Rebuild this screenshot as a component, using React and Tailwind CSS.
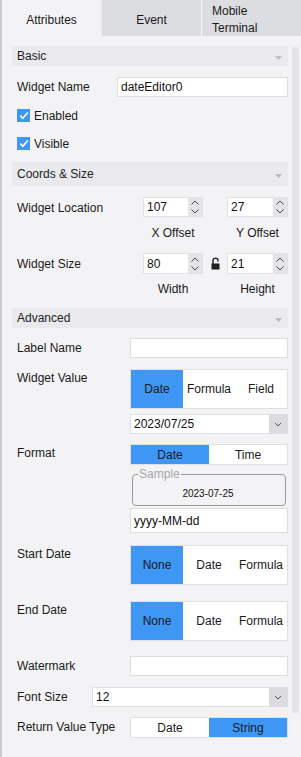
import React from 'react';

const ChevronUp = () => (
  <svg width="8" height="5" viewBox="0 0 8 5" fill="none">
    <path d="M0.5 4.5 L4 1 L7.5 4.5" stroke="#4a4a4a" strokeWidth="1" />
  </svg>
);

const ChevronDown = () => (
  <svg width="8" height="5" viewBox="0 0 8 5" fill="none">
    <path d="M0.5 0.5 L4 4 L7.5 0.5" stroke="#4a4a4a" strokeWidth="1" />
  </svg>
);

const Caret = () => (
  <svg width="7" height="4" viewBox="0 0 7 4">
    <path d="M0 0 H7 L3.5 4 Z" fill="#bdbdbd" />
  </svg>
);

const Section = ({ title, className = '' }) => (
  <div className={`flex items-center justify-between bg-[#eaeaec] pl-[5px] pr-[6px] text-[#222] ${className}`}>
    <span>{title}</span>
    <span className="pt-[3px]">
      <Caret />
    </span>
  </div>
);

const Check = ({ label, className = '' }) => (
  <div className={`flex items-center gap-[4px] pl-[5px] h-[13px] ${className}`}>
    <div className="w-[13px] h-[13px] bg-[#3e97f5] flex items-center justify-center">
      <svg width="10" height="9" viewBox="0 0 10 9" fill="none">
        <path d="M1.3 4.6 L3.8 7.2 L8.8 1.5" stroke="#fff" strokeWidth="1.6" />
      </svg>
    </div>
    <span>{label}</span>
  </div>
);

const TextInput = ({ value = '', className = '' }) => (
  <input
    readOnly
    value={value}
    className={`bg-white border border-[#dedede] px-[3px] text-[#111] outline-none min-w-0 ${className}`}
  />
);

const SpinInput = ({ value, className = '' }) => (
  <div className={`flex bg-white border border-[#e2e2e2] ${className}`}>
    <div className="flex-1 flex items-center px-[3px] text-[#111]">{value}</div>
    <div className="w-[14px] bg-[#e4e4e6] flex flex-col items-center justify-center gap-[4px]">
      <ChevronUp />
      <ChevronDown />
    </div>
  </div>
);

const Select = ({ value, className = '' }) => (
  <div className={`flex bg-white border border-[#dedede] ${className}`}>
    <div className="flex-1 flex items-center px-[3px] text-[#111]">{value}</div>
    <div className="w-[18px] bg-[#dcdcde] flex items-center justify-center">
      <svg width="8" height="5" viewBox="0 0 8 5" fill="none">
        <path d="M1 1 L4 4 L7 1" stroke="#555" strokeWidth="1" />
      </svg>
    </div>
  </div>
);

const Segmented = ({ items, active, className = '' }) => (
  <div className={`flex bg-white border border-[#e0e0e0] ${className}`}>
    {items.map((item, i) => (
      <div
        key={item}
        className={`flex-1 flex items-center justify-center ${i === active ? 'bg-[#3e97f5]' : ''}`}
      >
        {item}
      </div>
    ))}
  </div>
);

const Label = ({ children, className = '' }) => (
  <div className={`shrink-0 pl-[5px] leading-[19px] text-[#1a1a1a] ${className}`}>{children}</div>
);

const LockOpen = () => (
  <svg width="9" height="13" viewBox="0 0 9 13" fill="none">
    <path d="M2 7 V3.6 A2.5 2.5 0 0 1 7 3.6 V4.6" stroke="#1f1f1f" strokeWidth="1.4" />
    <rect x="0.5" y="6.5" width="8" height="6" fill="#1f1f1f" />
  </svg>
);

export default function App() {
  return (
    <div className="w-[301px] h-[757px] flex bg-[#f3f3f5] text-[12px] text-[#1a1a1a] overflow-hidden font-['Liberation_Sans',Arial,sans-serif]">
      <div className="w-[2px] shrink-0 bg-[#cbcbcb]" />
      <div className="flex-1 flex flex-col min-w-0">
        {/* tabs */}
        <div className="flex h-[36px] shrink-0">
          <div className="w-[99px] flex items-center justify-center pt-[4px] bg-[#f3f3f5]">Attributes</div>
          <div className="w-px bg-[#ebebed]" />
          <div className="w-[99px] flex items-center justify-center pt-[4px] bg-[#dcdde0]">Event</div>
          <div className="w-px bg-[#f7f7f8]" />
          <div className="flex-1 flex items-center pl-[10px] pt-[4px] bg-[#dcdde0] leading-[17.5px]">
            Mobile
            <br />
            Terminal
          </div>
        </div>

        <div className="flex flex-1 min-h-0">
          <div className="w-[276px] ml-[10px] flex flex-col pt-[10px]">
            <Section title="Basic" className="h-[20px]" />

            <div className="flex items-center mt-[11px]">
              <Label className="w-[105px]">Widget Name</Label>
              <TextInput value="dateEditor0" className="flex-1 h-[20px]" />
            </div>

            <Check label="Enabled" className="mt-[12px]" />
            <Check label="Visible" className="mt-[15px]" />

            <Section title="Coords & Size" className="h-[24px] mt-[12px]" />

            <div className="flex items-center mt-[10px]">
              <Label className="w-[131px] pt-[3px]">Widget Location</Label>
              <SpinInput value="107" className="w-[60px] h-[20px]" />
              <div className="w-[24px]" />
              <SpinInput value="27" className="flex-1 h-[20px]" />
            </div>
            <div className="flex mt-[6px] leading-[19px]">
              <div className="w-[131px]" />
              <div className="w-[60px] text-center">X Offset</div>
              <div className="w-[24px]" />
              <div className="flex-1 text-center">Y Offset</div>
            </div>

            <div className="flex items-center mt-[10px]">
              <Label className="w-[131px] pt-[2px]">Widget Size</Label>
              <SpinInput value="80" className="w-[60px] h-[21px]" />
              <div className="w-[24px] flex justify-center pl-[1px]">
                <LockOpen />
              </div>
              <SpinInput value="21" className="flex-1 h-[21px]" />
            </div>
            <div className="flex mt-[6px] leading-[19px]">
              <div className="w-[131px]" />
              <div className="w-[60px] text-center">Width</div>
              <div className="w-[24px]" />
              <div className="flex-1 text-center">Height</div>
            </div>

            <Section title="Advanced" className="h-[20px] mt-[9px]" />

            <div className="flex items-center mt-[10px]">
              <Label className="w-[118px]">Label Name</Label>
              <TextInput className="flex-1 h-[20px]" />
            </div>

            <div className="flex items-start mt-[11px]">
              <Label className="w-[118px]">Widget Value</Label>
              <Segmented items={['Date', 'Formula', 'Field']} active={0} className="flex-1 h-[40px]" />
            </div>

            <div className="flex mt-[5px]">
              <div className="w-[118px]" />
              <Select value="2023/07/25" className="flex-1 h-[20px]" />
            </div>

            <div className="flex items-start mt-[10px]">
              <Label className="w-[118px]">Format</Label>
              <Segmented items={['Date', 'Time']} active={0} className="flex-1 h-[21px]" />
            </div>

            <div className="flex mt-[2px]">
              <div className="w-[120px]" />
              <fieldset className="w-[154px] h-[39px] border border-[#9a9a9a] rounded-[4px] px-[5px]">
                <legend className="px-[1px] leading-[14px] text-[#a8a8a8]">Sample</legend>
                <div className="h-[24px] flex items-center justify-center text-[10px] text-[#111] pr-[2px]">
                  2023-07-25
                </div>
              </fieldset>
            </div>

            <div className="flex mt-[2px]">
              <div className="w-[118px]" />
              <TextInput value="yyyy-MM-dd" className="flex-1 h-[25px]" />
            </div>

            <div className="flex items-start mt-[12px]">
              <Label className="w-[118px]">Start Date</Label>
              <Segmented items={['None', 'Date', 'Formula']} active={0} className="flex-1 h-[40px]" />
            </div>

            <div className="flex items-start mt-[16px]">
              <Label className="w-[118px]">End Date</Label>
              <Segmented items={['None', 'Date', 'Formula']} active={0} className="flex-1 h-[40px]" />
            </div>

            <div className="flex items-center mt-[15px]">
              <Label className="w-[118px]">Watermark</Label>
              <TextInput className="flex-1 h-[20px]" />
            </div>

            <div className="flex items-center mt-[11px]">
              <Label className="w-[80px]">Font Size</Label>
              <Select value="12" className="flex-1 h-[20px]" />
            </div>

            <div className="flex items-center mt-[10px]">
              <Label className="w-[118px]">Return Value Type</Label>
              <Segmented items={['Date', 'String']} active={1} className="flex-1 h-[21px]" />
            </div>
          </div>

          <div className="w-[7px] h-[666px] mt-[11px] ml-[4px] rounded-full bg-[#e4e4e6] shrink-0" />
        </div>
      </div>
    </div>
  );
}
